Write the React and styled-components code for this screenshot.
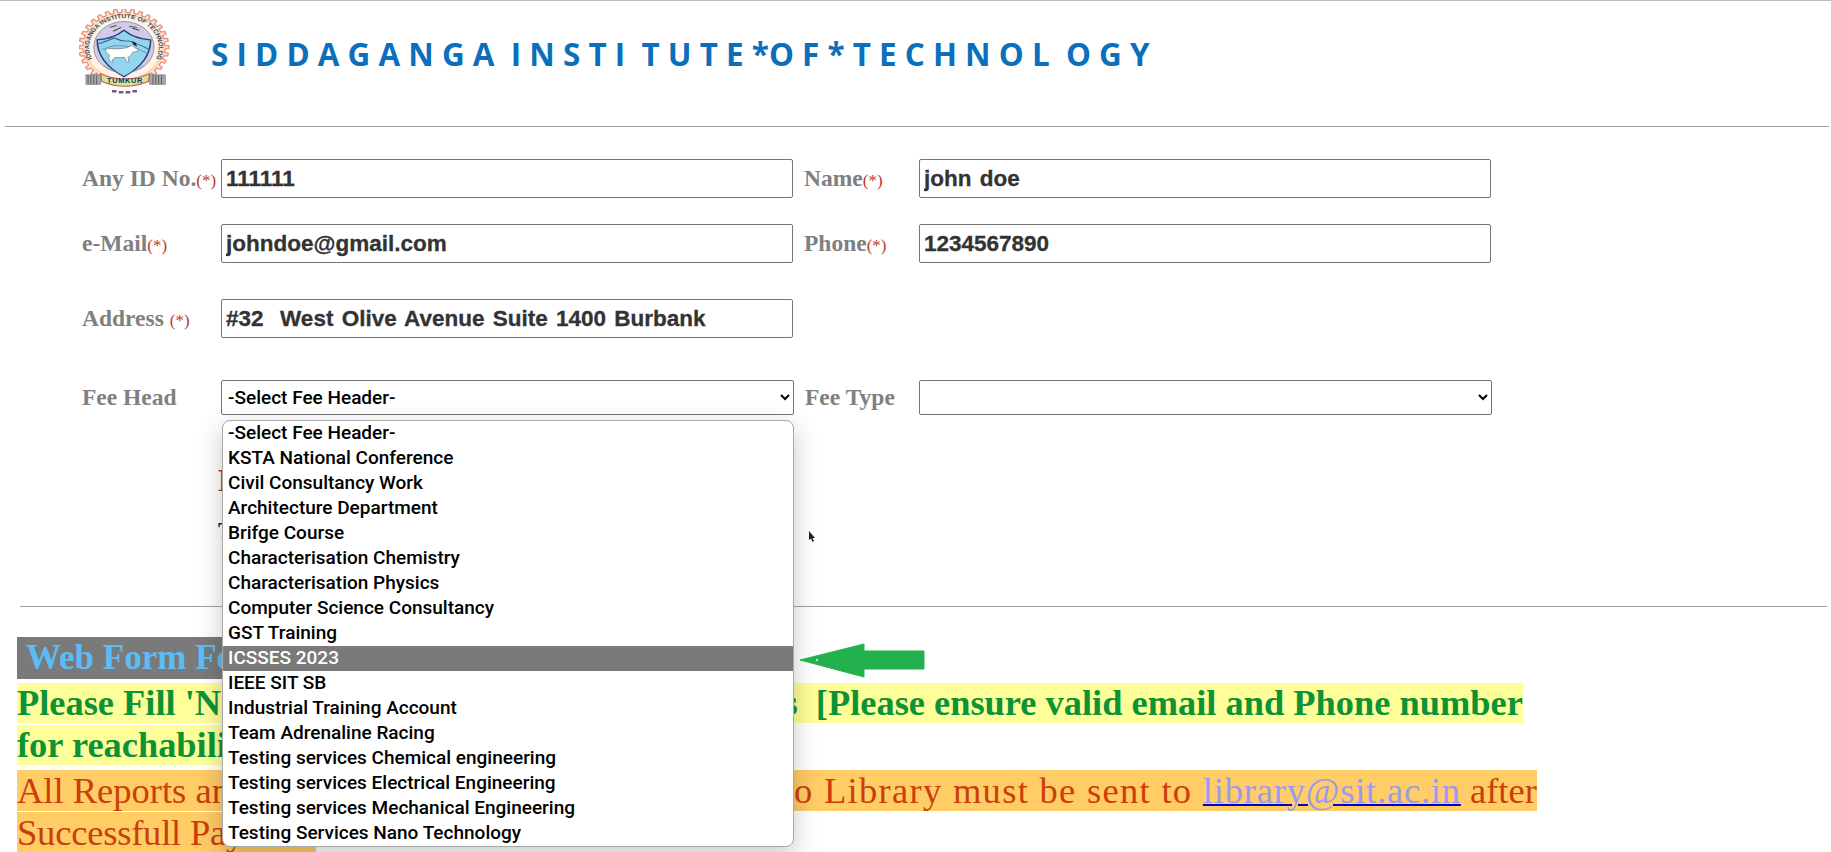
import React from 'react';
import styled, { createGlobalStyle } from 'styled-components';

const GlobalStyle = createGlobalStyle`
  html, body {
    margin: 0;
    padding: 0;
    height: 852px;
    overflow: hidden;
    background: #fff;
    font-family: "Liberation Serif", serif;
  }
`;

const Page = styled.div`
  position: relative;
  width: 1831px;
  height: 852px;
  overflow: hidden;
  border-top: 1px solid #bdbdbd;
  box-sizing: border-box;
`;

const Header = styled.header`
  display: flex;
  align-items: flex-start;
  height: 125px;
  padding: 8px 0 0 79px;
  box-sizing: border-box;
`;

const Title = styled.h1`
  margin: 26px 0 0 41px;
  font-family: "Open Sans", sans-serif;
  font-size: 31.4px;
  font-weight: 700;
  line-height: 38px;
  color: #0b6fbc;
  white-space: pre;
`;

const Rule = styled.hr`
  margin: ${(p) => p.$top || 0}px ${(p) => p.$right}px 0 ${(p) => p.$left}px;
  border: none;
  border-top: 1px solid #a0a0a0;
`;

const Form = styled.section`
  padding: 32px 0 0 82px;
`;

const Row = styled.div`
  display: flex;
  align-items: center;
  height: ${(p) => p.$height || 39}px;
  margin-top: ${(p) => p.$top || 0}px;
`;

const Label = styled.label`
  width: ${(p) => p.$width}px;
  flex: none;
  padding-left: ${(p) => p.$pad || 0}px;
  box-sizing: border-box;
  font-size: 23.5px;
  font-weight: 700;
  color: #808080;
  white-space: pre;
`;

const Req = styled.span`
  font-size: 17px;
  font-weight: 400;
  color: #c0392b;
`;

const Input = styled.input`
  width: 572px;
  height: 39px;
  flex: none;
  box-sizing: border-box;
  padding: 0 4px;
  border: 1px solid #767676;
  border-radius: 2px;
  outline: none;
  font-family: "Liberation Sans", sans-serif;
  font-size: 22.5px;
  font-weight: 700;
  word-spacing: 2px;
  -webkit-text-stroke: 0.3px #333;
  color: #333;
  background: #fff;
`;

const SelectWrap = styled.div`
  position: relative;
  flex: none;
  width: 573px;
  height: 35px;
`;

const Select = styled.select`
  display: block;
  width: 573px;
  height: 35px;
  box-sizing: border-box;
  padding: 0 2px;
  border: 1px solid #767676;
  border-radius: 2px;
  outline: none;
  font-family: Roboto, sans-serif;
  font-size: 19px;
  font-weight: 500;
  color: #000;
  background: #fff;
`;

const Menu = styled.ul`
  position: absolute;
  top: 40px;
  left: 1px;
  z-index: 3;
  width: 572px;
  margin: 0;
  padding: 0;
  box-sizing: border-box;
  list-style: none;
  background: #fff;
  border: 1px solid #a8a8a8;
  border-radius: 8px;
  box-shadow: 0 8px 26px rgba(0, 0, 0, 0.22);
`;

const MenuItem = styled.li`
  height: 25px;
  padding-left: 5px;
  font-family: Roboto, sans-serif;
  font-size: 19px;
  font-weight: 500;
  line-height: 24px;
  color: ${(p) => (p.$active ? '#fff' : '#000')};
  background: ${(p) => (p.$active ? '#7a7a7a' : 'transparent')};
  white-space: nowrap;
`;

const Behind = styled.p`
  margin: ${(p) => p.$top}px 0 0 218px;
  font-size: ${(p) => p.$size}px;
  font-weight: 700;
  line-height: 30px;
  color: ${(p) => p.$color};
`;

const Notices = styled.section`
  padding: 30px 0 0 17px;
  white-space: pre;
`;

const Banner = styled.div`
  display: inline-block;
  height: 42px;
  padding: 0 14px 0 9px;
  font-size: 35px;
  font-weight: 700;
  line-height: 42px;
  color: #5cbdf6;
  background: #7a7a7a;
`;

const Notice = styled.p`
  margin: ${(p) => p.$top}px 0 0;
  font-size: ${(p) => p.$size}px;
  font-weight: ${(p) => p.$weight};
  line-height: 42px;
  color: ${(p) => p.$color};
`;

const Mark = styled.span`
  background: ${(p) => p.$bg};
`;

const Spaced = styled.span`
  letter-spacing: ${(p) => p.$by}px;
`;

const MailLink = styled.a`
  letter-spacing: 0.8px;
  color: #9a9aee;
  text-decoration: underline;
  text-decoration-color: #0000c8;
  text-decoration-thickness: 2px;
`;

const Arrow = styled.svg`
  position: absolute;
  top: 642px;
  left: 799px;
  z-index: 4;
`;

const Cursor = styled.svg`
  position: absolute;
  top: 529px;
  left: 808px;
`;

const feeHeads = [
  '-Select Fee Header-',
  'KSTA National Conference',
  'Civil Consultancy Work',
  'Architecture Department',
  'Brifge Course',
  'Characterisation Chemistry',
  'Characterisation Physics',
  'Computer Science Consultancy',
  'GST Training',
  'ICSSES 2023',
  'IEEE SIT SB',
  'Industrial Training Account',
  'Team Adrenaline Racing',
  'Testing services Chemical engineering',
  'Testing services Electrical Engineering',
  'Testing services Mechanical Engineering',
  'Testing Services Nano Technology',
];

// gear outline for the college seal
function gearPath(cx, cy, outer, inner, teeth) {
  const step = (Math.PI * 2) / teeth;
  let d = '';
  for (let i = 0; i < teeth; i++) {
    const a = i * step;
    const pts = [
      [inner, a - step * 0.5],
      [inner, a - step * 0.28],
      [outer, a - step * 0.18],
      [outer, a + step * 0.18],
      [inner, a + step * 0.28],
    ];
    pts.forEach(([r, t], j) => {
      const x = (cx + r * Math.cos(t)).toFixed(2);
      const y = (cy + r * Math.sin(t)).toFixed(2);
      d += `${i === 0 && j === 0 ? 'M' : 'L'}${x} ${y}`;
    });
  }
  return d + 'Z';
}

const LogoSvg = styled.svg`
  flex: none;
`;

function Logo() {
  return (
    <LogoSvg width="91" height="87" viewBox="0 0 80 90" preserveAspectRatio="none">
      <defs>
        <path id="sealRing" d="M 11.5 52 A 30.5 30.5 0 1 1 67.5 52" />
      </defs>
      <path d={gearPath(39.5, 39.5, 39.5, 36, 32)} fill="#fbe3c6" stroke="#ea8a80" strokeWidth="1.2" />
      <circle cx="39.5" cy="39.5" r="33.5" fill="#fff3e4" stroke="#e8a090" strokeWidth="0.5" />
      <text fontFamily="Liberation Sans, sans-serif" fontSize="6" fontWeight="700" fill="#3c4660">
        <textPath href="#sealRing" startOffset="50%" textAnchor="middle">
          SIDDAGANGA INSTITUTE OF TECHNOLOGY
        </textPath>
      </text>
      <circle cx="39.5" cy="39.5" r="26.5" fill="#cfcbe8" stroke="#6d6a90" strokeWidth="0.6" />
      <path d="M27 19l6-2M30 23l7-4M44 18l7 1M47 20l6 2" stroke="#444" strokeWidth="1" fill="none" />
      <path
        d="M16 32Q30 31 39.5 22Q49 31 63 32C63 50 52 62 39.5 70C27 62 16 50 16 32Z"
        fill="#93d4f0"
        stroke="#26406f"
        strokeWidth="1.3"
      />
      <path d="M17 36Q27 32 31 30Q38 34 44 33Q52 36 62 42" stroke="#33557f" strokeWidth="0.9" fill="none" />
      <path d="M20 42Q30 37 37 38Q48 38 60 46" stroke="#5f7f9f" strokeWidth="0.7" fill="none" />
      <path d="M46 33l4 2 1 4-3-2z" fill="#222" />
      <path
        d="M24 42q1-2 4-1q8 1 14-1l4-2q2 0 3 2l3 2q1 2-2 2l-3 1q-1 4-4 5l1 5h-2l-2-5q-4 1-8 0l-3 3 1 2h-2l-2-4 1-3-2-2q-2-2-2-4z"
        fill="#fff"
        stroke="#555"
        strokeWidth="0.5"
      />
      <path d="M22 59q8 5 17.5 10q10-5 17-10" stroke="#6f9fc0" strokeWidth="0.7" fill="none" />
      <path d="M6 68h13v10H6zM62 68h14v10H62z" fill="#a6a6ae" stroke="#777" strokeWidth="0.5" />
      <path
        d="M8 68v10M10.5 68v10M13 68v10M15.5 68v10M65 68v10M67.5 68v10M70 68v10M72.5 68v10"
        stroke="#666"
        strokeWidth="0.9"
      />
      <path d="M19 67Q40 78 62 67L61 75Q40 85 20 75Z" fill="#cfe793" stroke="#d0584f" strokeWidth="1" />
      <text
        x="40.5"
        y="77"
        textAnchor="middle"
        fontFamily="Liberation Sans, sans-serif"
        fontSize="6.5"
        fontWeight="700"
        letterSpacing="0.6"
        fill="#25306a"
      >
        TUMKUR
      </text>
      <path d="M29 85h4M35 86h4M41 86h4M47 85h4" stroke="#7a5a7a" strokeWidth="2.6" />
    </LogoSvg>
  );
}

export default function App() {
  return (
    <Page>
      <GlobalStyle />
      <Header>
        <Logo />
        <Title>S I D D A G A N G A  I N S T I  T U T E *O F * T E C H N O L  O G Y</Title>
      </Header>
      <Rule $left={5} $right={2} />
      <Form>
        <Row>
          <Label $width={139}>Any ID No.<Req>(*)</Req></Label>
          <Input readOnly value="111111" />
          <Label $width={126} $pad={11}>Name<Req>(*)</Req></Label>
          <Input readOnly value="john doe" />
        </Row>
        <Row $top={26}>
          <Label $width={139}>e-Mail<Req>(*)</Req></Label>
          <Input readOnly value="johndoe@gmail.com" />
          <Label $width={126} $pad={11}>Phone<Req>(*)</Req></Label>
          <Input readOnly value="1234567890" />
        </Row>
        <Row $top={36}>
          <Label $width={139}>Address <Req>(*)</Req></Label>
          <Input readOnly value="#32  West Olive Avenue Suite 1400 Burbank" />
        </Row>
        <Row $top={42} $height={35}>
          <Label $width={139}>Fee Head</Label>
          <SelectWrap>
            <Select defaultValue={feeHeads[0]}>
              {feeHeads.map((h) => (
                <option key={h}>{h}</option>
              ))}
            </Select>
            <Menu>
              {feeHeads.map((h) => (
                <MenuItem key={h} $active={h === 'ICSSES 2023'}>{h}</MenuItem>
              ))}
            </Menu>
          </SelectWrap>
          <Label $width={125} $pad={11}>Fee Type</Label>
          <SelectWrap>
            <Select />
          </SelectWrap>
        </Row>
      </Form>
      <Behind $top={50} $size={32} $color="#c8202a">Enter Amount</Behind>
      <Behind $top={20} $size={24} $color="#222">Total</Behind>
      <Rule $left={20} $right={4} $top={61} />
      <Notices>
        <Banner>Web Form Fee Payment</Banner>
        <Notice $top={3} $size={36.4} $weight={700} $color="#0c9338">
          <Mark $bg="#ffff99">{"Please Fill 'Name, Email, Phone and Other Details  [Please ensure valid email and Phone number"}</Mark>
          <br />
          <Mark $bg="#ffff99">for reachability]</Mark>
        </Notice>
        <Notice $top={4} $size={36.5} $weight={400} $color="#cc3d0a">
          <Mark $bg="#ffcc66">
            {'All Reports and Other  Documents  to be submit'}
            <Spaced $by={1.3}>ted to Library must be sent to </Spaced>
            <MailLink>library@sit.ac.in</MailLink> after
          </Mark>
          <br />
          <Mark $bg="#ffcc66"><Spaced $by={-0.2}>Successfull Payment</Spaced></Mark>
        </Notice>
      </Notices>
      <Arrow width="126" height="36" viewBox="0 0 126 36">
        <path d="M1 17L65 1V8H125V26H65V34Z" fill="#22b14c" stroke="#22b14c" strokeLinejoin="round" />
        <circle cx="18" cy="17" r="1" fill="#fff" />
      </Arrow>
      <Cursor width="8" height="13" viewBox="0 0 8 13">
        <path d="M1 1V10L3 8.5L4.5 12L6 11L4.5 8H7Z" fill="#222" />
      </Cursor>
    </Page>
  );
}
